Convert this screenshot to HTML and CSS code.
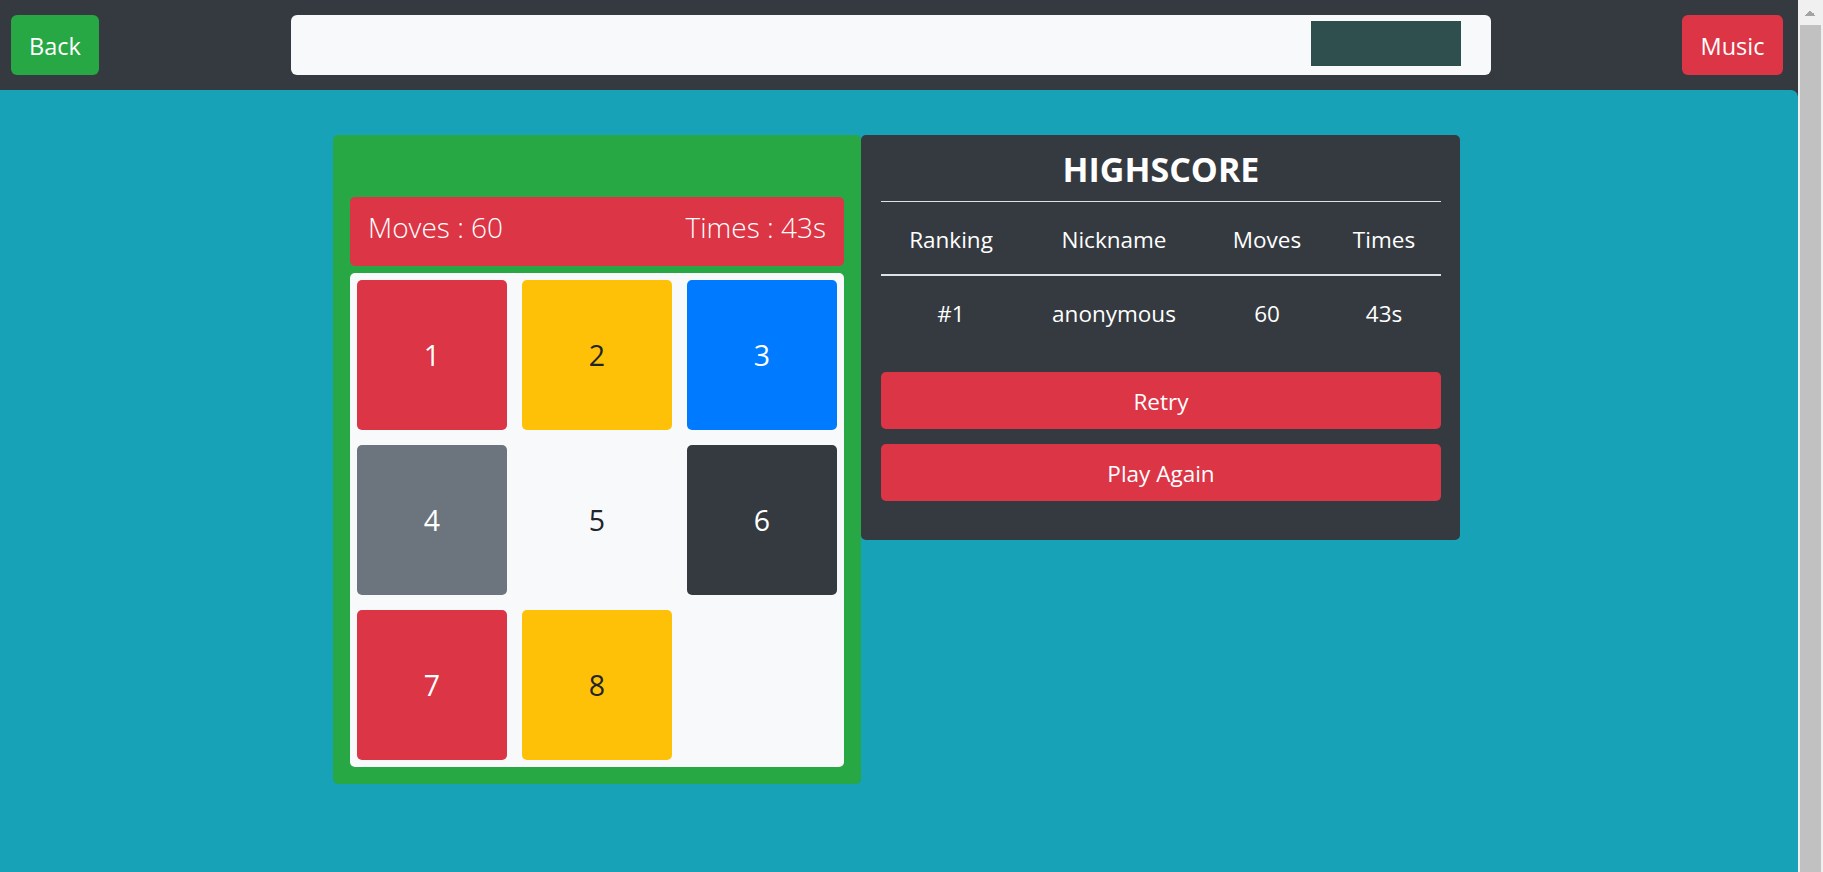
FILE: index.html
```html
<!DOCTYPE html>
<html lang="en">
<head>
<meta charset="utf-8">
<title>Puzzle</title>
<link rel="stylesheet" href="styles.css">
</head>
<body>
<div class="window">
  <div class="page">
    <nav class="topbar">
      <button class="btn btn-nav btn-green btn-back">Back</button>
      <div class="search-box"><div class="media-box"></div></div>
      <button class="btn btn-nav btn-red btn-music">Music</button>
    </nav>
    <main class="stage">
      <div class="panels">
        <section class="game-card">
          <div class="stats">
            <span>Moves : 60</span>
            <span>Times : 43s</span>
          </div>
          <div class="board">
            <div class="tile tile-red">1</div>
            <div class="tile tile-yellow">2</div>
            <div class="tile tile-blue">3</div>
            <div class="tile tile-gray">4</div>
            <div class="tile tile-light">5</div>
            <div class="tile tile-dark">6</div>
            <div class="tile tile-red">7</div>
            <div class="tile tile-yellow">8</div>
            <div class="tile tile-light"></div>
          </div>
        </section>
        <section class="score-card">
          <h3 class="score-title">HIGHSCORE</h3>
          <table class="score-table">
            <thead>
              <tr><th class="col-rank">Ranking</th><th class="col-name">Nickname</th><th class="col-moves">Moves</th><th>Times</th></tr>
            </thead>
            <tbody>
              <tr><td>#1</td><td>anonymous</td><td>60</td><td>43s</td></tr>
            </tbody>
          </table>
          <button class="btn btn-red btn-block">Retry</button>
          <button class="btn btn-red btn-block">Play Again</button>
        </section>
      </div>
    </main>
  </div>
  <div class="scrollbar" aria-hidden="true">
    <div class="scroll-arrow"></div>
    <div class="scroll-thumb"></div>
  </div>
</div>
</body>
</html>
```
FILE: styles.css
```css
* { box-sizing: border-box; }

html, body {
  margin: 0;
  height: 100%;
  overflow: hidden;
}

body {
  font-family: "Open Sans", "Noto Sans", "Liberation Sans", sans-serif;
  color: #fff;
  background: #343a40;
}

.window {
  display: flex;
  height: 100vh;
}

.page {
  flex: 1;
  min-width: 0;
  height: 100%;
  overflow: hidden;
  background: #343a40;
}

/* fake classic scrollbar */
.scrollbar {
  width: 25px;
  flex: none;
  background: #f0f0f0;
  display: flex;
  flex-direction: column;
  padding: 0 2px;
}

.scroll-arrow {
  height: 25px;
  flex: none;
  background:
    linear-gradient(to top left, #a3a3a3 50%, transparent 50%) 4px 10px / 6px 6px no-repeat,
    linear-gradient(to top right, #a3a3a3 50%, transparent 50%) 10px 10px / 6px 6px no-repeat;
}

.scroll-thumb {
  flex: 1;
  background: #c1c1c1;
}

/* top bar */
.topbar {
  height: 90px;
  display: flex;
  align-items: center;
  justify-content: space-between;
  padding: 15px 15px 15px 11px;
  background: #343a40;
}

.btn {
  font-family: inherit;
  border: 0;
  color: #fff;
  cursor: pointer;
  display: flex;
  align-items: center;
  justify-content: center;
  padding: 0;
}

.btn-nav {
  height: 60px;
  border-radius: 6px;
  font-size: 23.5px;
  padding-top: 2px;
}
.btn-back { width: 88px; }
.btn-music { width: 101px; }

.btn-green { background: #28a745; }
.btn-red { background: #dc3545; }

.search-box {
  width: 1200px;
  height: 60px;
  background: #f8f9fa;
  border-radius: 6px;
  display: flex;
  justify-content: flex-end;
  align-items: flex-start;
  padding: 6px 30px 0 0;
}

.media-box {
  width: 150px;
  height: 45px;
  background: #2f4f4f;
}

/* stage */
.stage {
  background: #17a2b8;
  border-top-right-radius: 7px;
  min-height: 790px;
  padding: 45px 5px 40px 0;
}

.panels {
  display: flex;
  justify-content: center;
  align-items: flex-start;
}

/* game card */
.game-card {
  width: 528px;
  background: #28a745;
  border-radius: 5px;
  padding: 62px 17px 17px;
}

.stats {
  height: 68.5px;
  background: #dc3545;
  border-radius: 5px;
  display: flex;
  align-items: center;
  justify-content: space-between;
  padding: 0 18px 9px;
  font-size: 28px;
  font-weight: 300;
  margin-bottom: 7.5px;
}

.board {
  background: #f8f9fa;
  border-radius: 5px;
  padding: 7px;
  display: grid;
  grid-template-columns: repeat(3, 150px);
  grid-auto-rows: 150px;
  gap: 15px;
}

.tile {
  border-radius: 5px;
  display: flex;
  align-items: center;
  justify-content: center;
  font-size: 28.5px;
  color: #fff;
}
.tile-red { background: #dc3545; }
.tile-yellow { background: #ffc107; color: #212529; }
.tile-blue { background: #007bff; }
.tile-gray { background: #6c757d; }
.tile-light { background: #f8f9fa; color: #212529; }
.tile-dark { background: #343a40; }

/* score card */
.score-card {
  width: 599px;
  background: #343a40;
  border-radius: 5px;
  padding: 0 19px 39px 20px;
}

.score-title {
  margin: 13px 0 10px;
  font-size: 34px;
  line-height: 43px;
  font-weight: 700;
  text-align: center;
}

.score-table {
  width: 100%;
  border-collapse: collapse;
  margin-bottom: 24px;
  font-size: 22.5px;
}

.score-table th,
.score-table td {
  font-weight: 400;
  text-align: center;
  line-height: 36px;
  padding: 20px 4px 16px;
}

.score-table th {
  border-top: 1px solid #dee2e6;
  border-bottom: 2px solid #dee2e6;
}

.col-rank { width: 140px; }
.col-name { width: 186px; }
.col-moves { width: 120px; }

.btn-block {
  width: 100%;
  height: 57px;
  border-radius: 5px;
  font-size: 22.5px;
  padding-top: 2px;
  margin-bottom: 15px;
}
.btn-block:last-child { margin-bottom: 0; }
```
